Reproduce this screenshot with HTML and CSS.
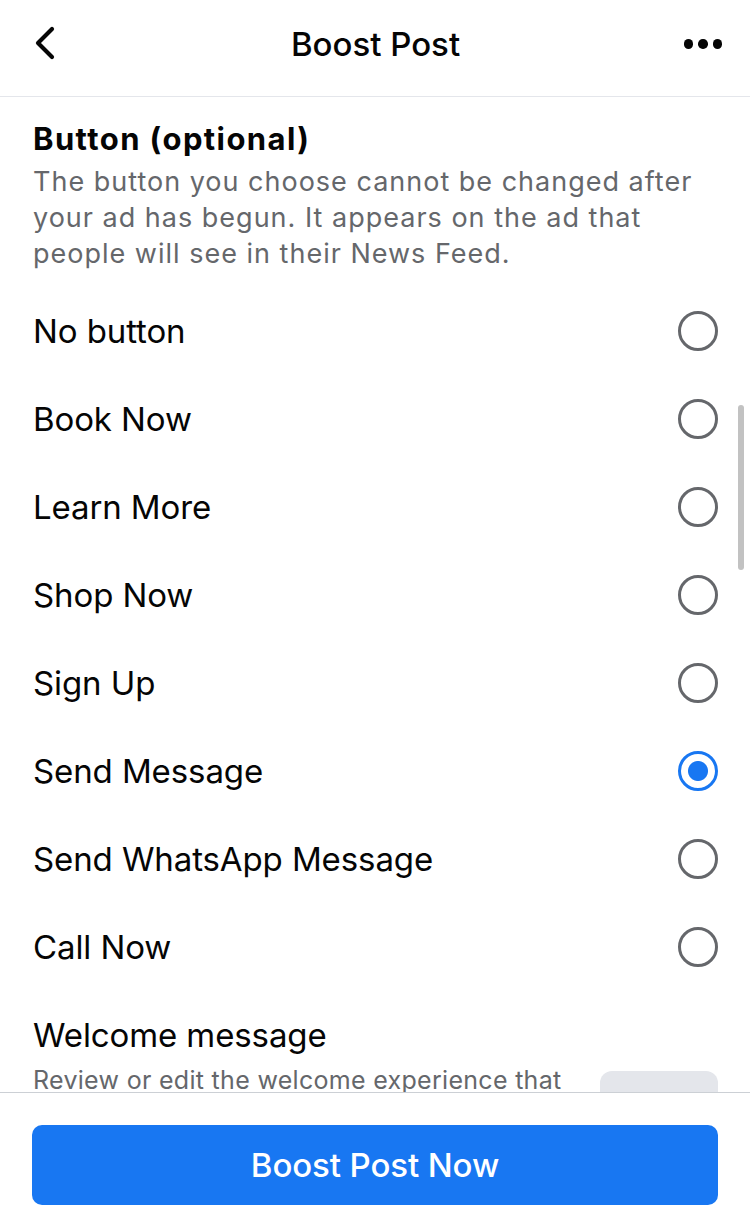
FILE: index.html
```html
<!DOCTYPE html>
<html lang="en">
  <head>
    <meta charset="UTF-8">
    <meta name="viewport" content="width=device-width, initial-scale=1.0">
    <title>Boost Post</title>
    <link rel="stylesheet" href="styles.css">
  </head>
  <body>
    <div class="screen">
      <header class="topbar">
        <button class="icon-btn back" type="button" aria-label="Back">
          <svg width="24" height="34" viewBox="0 0 24 34"><path d="M19 3 L5 17 L19 31" fill="none" stroke="#050505" stroke-width="4.2" stroke-linecap="round" stroke-linejoin="round"/></svg>
        </button>
        <h1>Boost Post</h1>
        <button class="icon-btn more" type="button" aria-label="More">
          <span class="dot"></span><span class="dot"></span><span class="dot"></span>
        </button>
      </header>

      <main class="content">
        <section class="intro">
          <h2>Button (optional)</h2>
          <p>The button you choose cannot be changed after your ad has begun. It appears on the ad that people will see in their News Feed.</p>
        </section>

        <ul class="options">
          <li class="option"><span>No button</span><span class="radio"></span></li>
          <li class="option"><span>Book Now</span><span class="radio"></span></li>
          <li class="option"><span>Learn More</span><span class="radio"></span></li>
          <li class="option"><span>Shop Now</span><span class="radio"></span></li>
          <li class="option"><span>Sign Up</span><span class="radio"></span></li>
          <li class="option"><span>Send Message</span><span class="radio checked"></span></li>
          <li class="option"><span>Send WhatsApp Message</span><span class="radio"></span></li>
          <li class="option"><span>Call Now</span><span class="radio"></span></li>
        </ul>

        <section class="welcome">
          <h3>Welcome message</h3>
          <div class="welcome-row">
            <p>Review or edit the welcome experience that people see when they message you.</p>
            <span class="edit-box"></span>
          </div>
        </section>

        <div class="scrollbar"></div>
      </main>

      <footer class="bottombar">
        <button class="boost-btn" type="button">Boost Post Now</button>
      </footer>
    </div>
  </body>
</html>
```

FILE: styles.css
```css
body { margin: 0; background: #fff; font-family: Inter, "Noto Sans", sans-serif; color: #050505; }
.screen { width: 750px; height: 1217px; display: flex; flex-direction: column; overflow: hidden; }

.topbar { height: 96px; flex-shrink: 0; border-bottom: 1px solid #e4e6eb; display: flex; align-items: center; justify-content: space-between; padding: 0 28px 0 33px; }
.topbar h1 { margin: -8px 0 0 -4px; font-size: 33px; font-weight: 500; letter-spacing: 0; }
.icon-btn { background: none; border: none; padding: 0; cursor: pointer; display: flex; align-items: center; }
.back { width: 42px; margin-top: -10px; }
.more { width: 42px; gap: 5px; justify-content: flex-end; margin-top: -8px; }
.dot { width: 9.5px; height: 9.5px; border-radius: 50%; background: #050505; }

.content { flex: 1; position: relative; overflow: hidden; padding: 0 32px 0 33px; }
.intro { padding-top: 22px; }
.intro h2 { margin: 0; font-size: 31px; font-weight: 700; line-height: 40px; letter-spacing: 1.4px; }
.intro p { margin: 5px 0 0; font-size: 27px; line-height: 36px; color: #65676b; letter-spacing: 1px; }

.options { list-style: none; margin: 15px 0 0; padding: 0; }
.option { height: 88px; display: flex; align-items: center; justify-content: space-between; font-size: 33px; letter-spacing: -0.1px; }
.radio { width: 34px; height: 34px; border-radius: 50%; border: 3px solid #65676b; }
.radio.checked { border-color: #1877f2; background: radial-gradient(circle, #1877f2 0 9.5px, #fff 10.5px); }

.welcome { padding-top: 24px; }
.welcome h3 { margin: 0; font-size: 33px; font-weight: 400; line-height: 40px; letter-spacing: -0.1px; }
.welcome-row { display: flex; justify-content: space-between; gap: 30px; margin-top: 8px; }
.welcome-row p { margin: 0; font-size: 25px; line-height: 34px; color: #65676b; letter-spacing: 0.3px; max-width: 540px; }
.edit-box { flex-shrink: 0; width: 118px; height: 60px; margin-top: 8px; border-radius: 12px; background: #e4e6eb; }

.scrollbar { position: absolute; top: 308px; right: 6px; width: 6px; height: 165px; border-radius: 3px; background: #c2c2c2; }

.bottombar { height: 125px; flex-shrink: 0; border-top: 1px solid #ccd0d5; background: #fff; padding: 32px 32px 0; box-sizing: border-box; }
.boost-btn { width: 100%; height: 80px; border: none; border-radius: 10px; background: #1877f2; color: #fff; font-family: inherit; font-size: 33px; font-weight: 500; letter-spacing: -0.1px; cursor: pointer; }
```
